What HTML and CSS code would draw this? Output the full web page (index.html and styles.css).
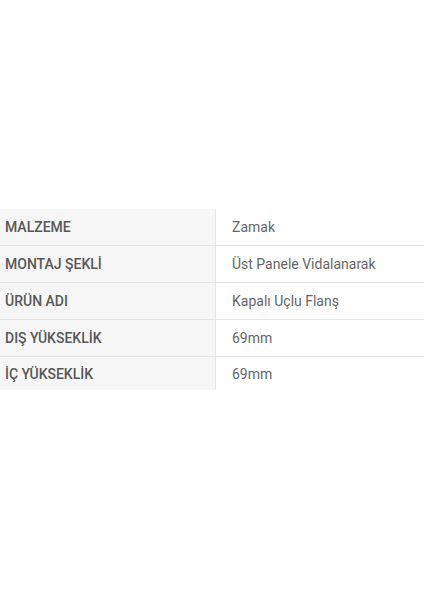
FILE: index.html
```html
<!DOCTYPE html>
<html lang="tr">
<head>
<meta charset="utf-8">
<link rel="stylesheet" href="styles.css">
</head>
<body>
<div class="page">
  <div class="specs">
    <div class="row"><div class="key">MALZEME</div><div class="val">Zamak</div></div>
    <div class="row"><div class="key">MONTAJ ŞEKLİ</div><div class="val">Üst Panele Vidalanarak</div></div>
    <div class="row"><div class="key">ÜRÜN ADI</div><div class="val">Kapalı Uçlu Flanş</div></div>
    <div class="row"><div class="key">DIŞ YÜKSEKLİK</div><div class="val">69mm</div></div>
    <div class="row"><div class="key">İÇ YÜKSEKLİK</div><div class="val">69mm</div></div>
  </div>
</div>
</body>
</html>
```
FILE: styles.css
```css
html, body {
  margin: 0;
  padding: 0;
  background: #fff;
  font-family: Roboto, "Noto Sans", sans-serif;
}
.page {
  padding-top: 209px;
}
.specs {
  display: flex;
  flex-direction: column;
}
.row {
  display: grid;
  grid-template-columns: 216px 1fr;
  height: 36px;
}
.row + .row {
  border-top: 1px solid #e4e4e4;
}
.row:last-child {
  height: 33px;
}
.key {
  background: #f6f6f6;
  border-right: 1px solid #e6e6e6;
  display: flex;
  align-items: center;
  padding-left: 5px;
  font-size: 14px;
  font-weight: 500;
  color: #585858;
}
.val {
  display: flex;
  align-items: center;
  padding-left: 16px;
  font-size: 14px;
  color: #666;
}
```
